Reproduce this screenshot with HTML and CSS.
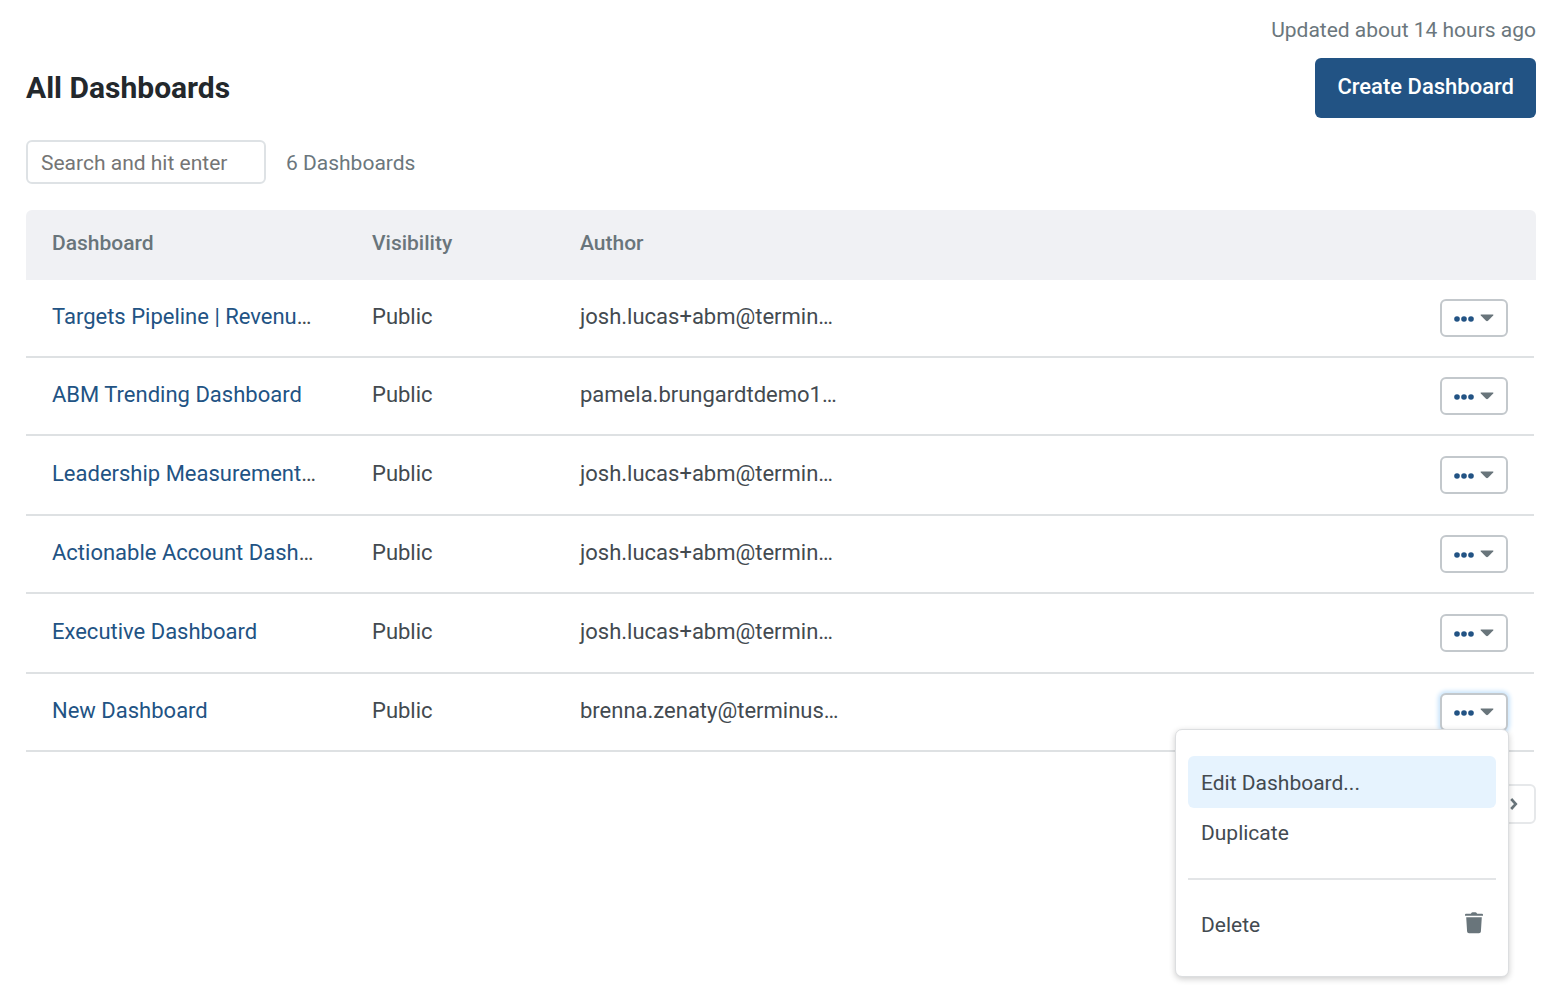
FILE: index.html
```html
<!DOCTYPE html>
<html lang="en">
<head>
<meta charset="utf-8">
<title>All Dashboards</title>
<link rel="stylesheet" href="styles.css">
</head>
<body>
<svg class="sprite" aria-hidden="true">
  <symbol id="dots" viewBox="0 0 20 6"><circle cx="3" cy="3" r="2.8"/><circle cx="10" cy="3" r="2.8"/><circle cx="17" cy="3" r="2.8"/></symbol>
  <symbol id="caret" viewBox="0 0 14 8"><path d="M1.2 0.5h11.6q1.2 0 .4 1L8 6.7q-1 .9-2 0L.8 1.5q-.8-1 .4-1z"/></symbol>
</svg>
<main class="page">
  <p class="updated">Updated about 14 hours ago</p>
  <header class="heading">
    <h1 class="title">All Dashboards</h1>
    <button class="create" type="button">Create Dashboard</button>
  </header>
  <div class="filters">
    <input class="search" type="text" placeholder="Search and hit enter" aria-label="Search and hit enter">
    <span class="count">6 Dashboards</span>
  </div>
  <table class="list">
    <colgroup><col class="col-name"><col class="col-visibility"><col class="col-author"><col></colgroup>
    <thead>
      <tr><th>Dashboard</th><th>Visibility</th><th>Author</th><th></th></tr>
    </thead>
    <tbody>
      <tr><td><a href="#">Targets Pipeline | Revenu</a>…</td><td>Public</td><td>josh.lucas+abm@termin…</td>
        <td><div class="actions"><button class="more" type="button"><svg class="dots"><use href="#dots"/></svg><svg class="caret"><use href="#caret"/></svg></button></div></td></tr>
      <tr><td><a href="#">ABM Trending Dashboard</a></td><td>Public</td><td>pamela.brungardtdemo1…</td>
        <td><div class="actions"><button class="more" type="button"><svg class="dots"><use href="#dots"/></svg><svg class="caret"><use href="#caret"/></svg></button></div></td></tr>
      <tr><td><a href="#">Leadership Measurement</a>…</td><td>Public</td><td>josh.lucas+abm@termin…</td>
        <td><div class="actions"><button class="more" type="button"><svg class="dots"><use href="#dots"/></svg><svg class="caret"><use href="#caret"/></svg></button></div></td></tr>
      <tr><td><a href="#">Actionable Account Dash</a>…</td><td>Public</td><td>josh.lucas+abm@termin…</td>
        <td><div class="actions"><button class="more" type="button"><svg class="dots"><use href="#dots"/></svg><svg class="caret"><use href="#caret"/></svg></button></div></td></tr>
      <tr><td><a href="#">Executive Dashboard</a></td><td>Public</td><td>josh.lucas+abm@termin…</td>
        <td><div class="actions"><button class="more" type="button"><svg class="dots"><use href="#dots"/></svg><svg class="caret"><use href="#caret"/></svg></button></div></td></tr>
      <tr><td><a href="#">New Dashboard</a></td><td>Public</td><td>brenna.zenaty@terminus…</td>
        <td><div class="actions">
          <button class="more is-open" type="button"><svg class="dots"><use href="#dots"/></svg><svg class="caret"><use href="#caret"/></svg></button>
          <div class="menu">
            <button class="item is-active" type="button">Edit Dashboard...</button>
            <button class="item" type="button">Duplicate</button>
            <hr class="divider">
            <button class="item" type="button">Delete
              <svg class="trash" viewBox="0 0 18 22"><path d="M0 2.8q0-1 1-1h4.8L6.8.6q.3-.4.9-.4h2.6q.6 0 .9.4l1 1.2H17q1 0 1 1v1H0zM1.2 5.2h15.6l-.9 14.2q-.1 1.8-1.9 1.8H4q-1.800 0-1.900-1.800z"/></svg>
            </button>
          </div>
        </div></td></tr>
    </tbody>
  </table>
  <nav class="pager">
    <button class="next" type="button"><svg class="chevron" viewBox="0 0 8 12"><path d="M1.200 1l4.600 5-4.600 5" fill="none" stroke="currentColor" stroke-width="2.600"/></svg></button>
  </nav>
</main>
</body>
</html>
```
FILE: styles.css
```css
* {
  box-sizing: border-box;
}

body {
  margin: 0;
  background: #fff;
  color: #434a50;
  font: 22px/28px Roboto, "Liberation Sans", sans-serif;
}

button,
input {
  font: inherit;
  color: inherit;
}

.sprite {
  display: none;
}

.page {
  min-height: 100vh;
  padding: 16px 26px;
}

.updated {
  margin: 0;
  color: #6b777d;
  font-size: 21px;
  text-align: right;
}

.heading {
  display: flex;
  align-items: center;
  justify-content: space-between;
  margin-top: 14px;
}

.title {
  margin: 0;
  color: #23282c;
  font-size: 30px;
  font-weight: 700;
  line-height: 36px;
}

.create {
  height: 60px;
  padding: 0 22px 2px;
  border: 0;
  border-radius: 6px;
  background: #225384;
  color: #fff;
  font-weight: 500;
}

.filters {
  display: flex;
  align-items: center;
  gap: 20px;
  margin-top: 22px;
  color: #6b777d;
  font-size: 21px;
}

.count {
  padding-top: 2px;
}

.search {
  width: 240px;
  height: 44px;
  padding: 2px 13px 0;
  border: 2px solid #dee2e5;
  border-radius: 6px;
  background: #fff;
}

.search::placeholder {
  color: #757575;
  opacity: 1;
}

.list {
  width: calc(100% - 2px);
  margin-top: 26px;
  border-collapse: separate;
  border-spacing: 0;
  table-layout: fixed;
}

.col-name {
  width: 320px;
}

.col-visibility {
  width: 208px;
}

.col-author {
  width: 320px;
}

.list th {
  height: 70px;
  padding: 0 26px 4px;
  background: #f0f1f4;
  color: #69757b;
  font-size: 21px;
  font-weight: 500;
  text-align: left;
}

.list th:first-child {
  border-top-left-radius: 6px;
}

.list th:last-child {
  border-top-right-radius: 6px;
  box-shadow: 2px 0 #f0f1f4;
}

.list td {
  height: 78px;
  padding: 0 26px 2px;
  border-bottom: 2px solid #dee1e3;
  white-space: nowrap;
}

.list tbody tr:nth-child(2n+3) td {
  height: 80px;
}

.list td:last-child {
  padding-bottom: 0;
}

.list a {
  color: #225384;
  text-decoration: none;
}

.actions {
  position: relative;
  display: flex;
  justify-content: flex-end;
}

.more {
  display: flex;
  align-items: center;
  justify-content: center;
  gap: 6px;
  width: 68px;
  height: 38px;
  padding: 0;
  border: 2px solid #c3c8cc;
  border-radius: 6px;
  background: #fff;
}

.more.is-open {
  box-shadow: 0 0 4px 2px #c9e4fb;
}

.dots {
  width: 20px;
  height: 6px;
  margin-top: 2px;
  fill: #225384;
}

.caret {
  width: 14px;
  height: 8px;
  fill: #69757b;
}

.menu {
  position: absolute;
  z-index: 1;
  top: calc(100% - 2px);
  right: -1px;
  width: 334px;
  padding: 26px 12px;
  border: 1px solid #dcdee0;
  border-radius: 7px;
  background: #fff;
  box-shadow: 0 2px 6px rgba(0, 0, 0, 0.2);
}

.item {
  display: flex;
  align-items: center;
  justify-content: space-between;
  width: 100%;
  height: 50px;
  padding: 0 13px;
  border: 0;
  border-radius: 6px;
  background: none;
  font-size: 21px;
  text-align: left;
}

.item.is-active {
  height: 52px;
  padding-top: 2px;
  background: #e6f3fe;
}

.divider {
  height: 2px;
  margin: 20px 0;
  border: 0;
  background: #e3e5e7;
}

.trash {
  width: 18px;
  height: 22px;
  margin-bottom: 4px;
  fill: #69757b;
}

.pager {
  display: flex;
  justify-content: flex-end;
  margin-top: 32px;
}

.next {
  display: flex;
  align-items: center;
  justify-content: center;
  width: 44px;
  height: 40px;
  padding: 0;
  border: 2px solid #e6e8ea;
  border-radius: 6px;
  background: #fff;
  color: #69757b;
}

.chevron {
  width: 8px;
  height: 12px;
}
```
